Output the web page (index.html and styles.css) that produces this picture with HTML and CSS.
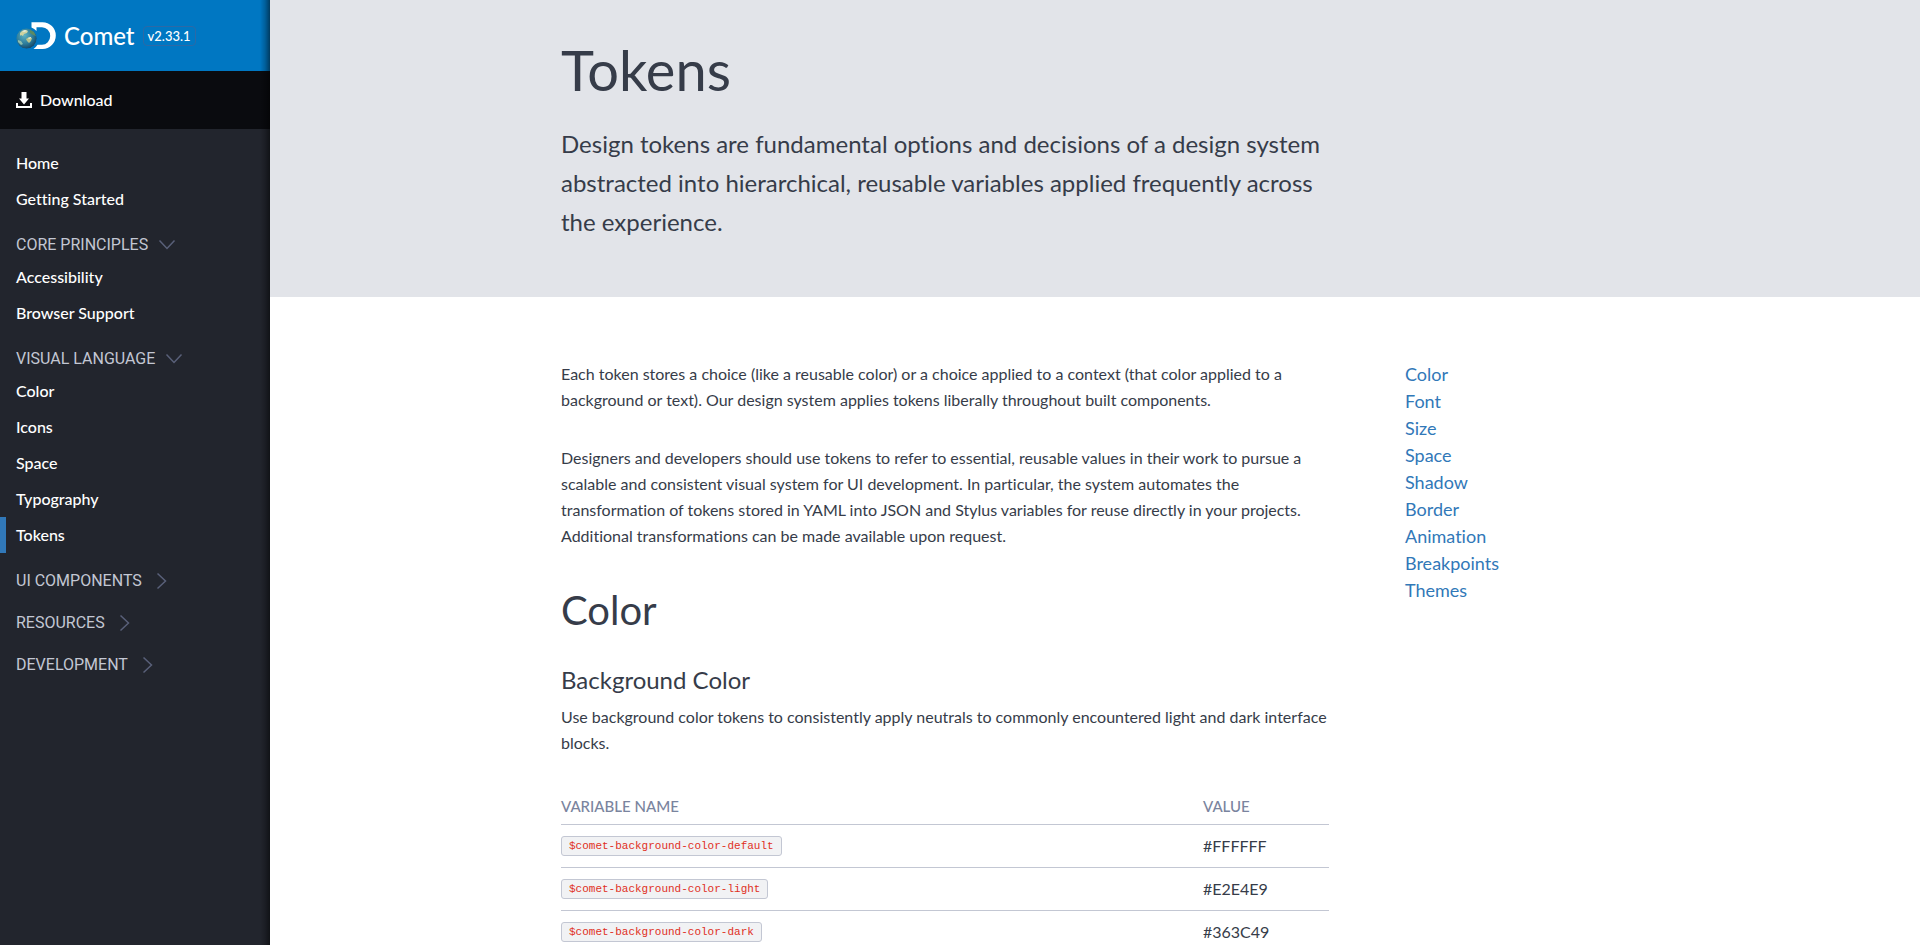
FILE: index.html
```
<!DOCTYPE html>
<html lang="en">
<head>
<meta charset="utf-8">
<meta name="viewport" content="width=device-width, initial-scale=1">
<title>Tokens | Comet</title>
<link rel="stylesheet" href="styles.css">
</head>
<body class="shell">
<aside class="sidebar">
  <a class="brand" href="#home">
    <svg class="brand-logo" width="40" height="27" viewBox="0 0 40 27" aria-hidden="true">
      <defs>
        <radialGradient id="ocean" cx="0.4" cy="0.35" r="0.7">
          <stop offset="0" stop-color="#5fb3c4"/>
          <stop offset="0.6" stop-color="#2b7a98"/>
          <stop offset="1" stop-color="#123f5f"/>
        </radialGradient>
        <clipPath id="disc"><circle cx="10.5" cy="16.5" r="10.3"/></clipPath>
      </defs>
      <path fill="#fff" d="M15.5.2H26.500a13.300 13.400 0 0 1 0 26.800H17.500a13 13 0 0 0 4-4.200H26a8.200 8.800 0 0 0 0-17.600H20.500V9a13 13 0 0 0-5-3.600Z"/>
      <g clip-path="url(#disc)">
        <circle cx="10.500" cy="16.500" r="10.300" fill="url(#ocean)"/>
        <path fill="#cfd3a0" d="M4 11l2-2 4-1 2 1-1 2-3 1-1 2-2-1-1 1z"/>
        <path fill="#b9c48c" d="M10 17l3-2 3 1-1 3-2 2-2-2z"/>
        <path fill="#5b8a62" d="M14 8l4 2 2 4-3-1-3-2z"/>
        <path fill="#8fbfae" d="M2 18l3 1 2 3-2 1-3-3z"/>
        <path fill="#e6ecdc" d="M6 9l3-1 2 1-3 1zM12 16l3-1v1l-2 1z"/>
      </g>
    </svg>
    <span class="brand-name">Comet</span>
    <span class="brand-version">v2.33.1</span>
  </a>
  <a class="download" href="#download">
    <svg width="16" height="16" viewBox="0 0 16 16" fill="#fff" aria-hidden="true">
      <path d="M5.500 0h5v6.500H13L8 12.500 3 6.500h2.500z"/>
      <path d="M0 11h2v3h12v-3h2v5H0z"/>
    </svg>
    Download
  </a>
  <nav class="nav" aria-label="Main">
    <a class="nav-link" href="#home">Home</a>
    <a class="nav-link" href="#start">Getting Started</a>
    <button class="nav-group" type="button" aria-expanded="true">Core Principles
      <svg class="chevron" width="18" height="18" viewBox="0 0 18 18" aria-hidden="true"><path d="M1.500 4.500L9 12.500l7.500-8"/></svg>
    </button>
    <a class="nav-link" href="#accessibility">Accessibility</a>
    <a class="nav-link" href="#browsers">Browser Support</a>
    <button class="nav-group" type="button" aria-expanded="true">Visual Language
      <svg class="chevron" width="18" height="18" viewBox="0 0 18 18" aria-hidden="true"><path d="M1.500 4.500L9 12.500l7.500-8"/></svg>
    </button>
    <a class="nav-link" href="#colors">Color</a>
    <a class="nav-link" href="#icons">Icons</a>
    <a class="nav-link" href="#spaces">Space</a>
    <a class="nav-link" href="#typography">Typography</a>
    <a class="nav-link is-current" href="#tokens" aria-current="page">Tokens</a>
    <button class="nav-group" type="button" aria-expanded="false">UI Components
      <svg class="chevron" width="18" height="18" viewBox="0 0 18 18" aria-hidden="true"><path d="M5.500 1.500l8 7.500-8 7.500"/></svg>
    </button>
    <button class="nav-group" type="button" aria-expanded="false">Resources
      <svg class="chevron" width="18" height="18" viewBox="0 0 18 18" aria-hidden="true"><path d="M5.500 1.500l8 7.500-8 7.500"/></svg>
    </button>
    <button class="nav-group" type="button" aria-expanded="false">Development
      <svg class="chevron" width="18" height="18" viewBox="0 0 18 18" aria-hidden="true"><path d="M5.500 1.500l8 7.500-8 7.500"/></svg>
    </button>
  </nav>
</aside>
<main class="page" id="tokens">
  <header class="hero">
    <div class="grid">
      <div class="column">
        <h1 class="title">Tokens</h1>
        <p class="lead">Design tokens are fundamental options and decisions of a design system abstracted into hierarchical, reusable variables applied frequently across the experience.</p>
      </div>
    </div>
  </header>
  <div class="grid body">
    <div class="column">
      <p class="text">Each token stores a choice (like a reusable color) or a choice applied to a context (that color applied to a background or text). Our design system applies tokens liberally throughout built components.</p>
      <p class="text">Designers and developers should use tokens to refer to essential, reusable values in their work to pursue a scalable and consistent visual system for UI development. In particular, the system automates the transformation of tokens stored in YAML into JSON and Stylus variables for reuse directly in your projects. Additional transformations can be made available upon request.</p>
      <h2 class="section-title" id="color">Color</h2>
      <h3 class="sub-title">Background Color</h3>
      <p class="text">Use background color tokens to consistently apply neutrals to commonly encountered light and dark interface blocks.</p>
      <table class="tokens">
        <thead>
          <tr><th scope="col">Variable Name</th><th scope="col" class="value">Value</th></tr>
        </thead>
        <tbody>
          <tr><td><code class="code">$comet-background-color-default</code></td><td>#FFFFFF</td></tr>
          <tr><td><code class="code">$comet-background-color-light</code></td><td>#E2E4E9</td></tr>
          <tr><td><code class="code">$comet-background-color-dark</code></td><td>#363C49</td></tr>
        </tbody>
      </table>
    </div>
    <nav class="toc" aria-label="On this page">
      <a href="#color">Color</a>
      <a href="#font">Font</a>
      <a href="#size">Size</a>
      <a href="#space">Space</a>
      <a href="#shadow">Shadow</a>
      <a href="#border">Border</a>
      <a href="#animation">Animation</a>
      <a href="#breakpoints">Breakpoints</a>
      <a href="#themes">Themes</a>
    </nav>
  </div>
</main>
</body>
</html>
```
FILE: styles.css
```
* {
  box-sizing: border-box;
}

h1, h2, h3, p {
  margin: 0;
  font-weight: 400;
}

a {
  color: inherit;
  text-decoration: none;
}

.shell {
  display: flex;
  height: 100vh;
  margin: 0;
  background: #fff;
  color: #363c49;
  font-family: Lato, "Open Sans", sans-serif;
  font-size: 16px;
  font-variant-ligatures: none;
  line-height: 26px;
}

.sidebar {
  position: relative;
  flex: 0 0 270px;
  overflow: hidden;
  background: #22252d;
  color: #fff;
}

.sidebar::after {
  content: "";
  position: absolute;
  inset: 0 0 0 auto;
  width: 10px;
  background: linear-gradient(to right, rgba(0, 0, 0, 0), rgba(0, 0, 0, 0.2) 50%, rgba(0, 0, 0, 0.5));
  pointer-events: none;
}

.brand {
  display: flex;
  align-items: center;
  height: 71px;
  padding: 0 16px;
  background: #0077c2;
}

.brand-name {
  margin-left: 8px;
  font-size: 24px;
  font-weight: 500;
}

.brand-version {
  margin-left: 8px;
  padding: 0 4px;
  border: 1px solid #2c69a6;
  border-radius: 4px;
  font-size: 13px;
  font-weight: 500;
  line-height: 18px;
}

.download {
  display: flex;
  align-items: center;
  gap: 8px;
  height: 58px;
  padding: 0 16px;
  background: #0a0b0f;
  font-weight: 500;
}

.nav {
  padding-top: 16px;
}

.nav-link {
  display: block;
  padding-left: 16px;
  font-weight: 500;
  line-height: 36px;
}

.nav-link.is-current {
  padding-left: 10px;
  border-left: 6px solid #3178b8;
}

.nav-group {
  display: flex;
  align-items: center;
  gap: 10px;
  width: 100%;
  padding: 15px 16px 1px;
  border: 0;
  background: none;
  color: #c3c7d3;
  font: 16px/26px Roboto, sans-serif;
  text-align: left;
  text-transform: uppercase;
}

.chevron {
  fill: none;
  stroke: #596079;
  stroke-width: 1.5;
}

.page {
  flex: 1;
  min-width: 0;
  overflow-y: auto;
  scrollbar-width: none;
}

.grid {
  display: grid;
  grid-template-columns: minmax(0, 768px) 224px;
  column-gap: 76px;
  justify-content: center;
  padding: 0 24px;
}

.hero {
  padding: 40px 0 56px;
  background: #e2e4e9;
}

.title {
  margin-bottom: 24px;
  font-size: 56px;
  line-height: 60px;
}

.lead {
  font-size: 24px;
  line-height: 39px;
}

.body {
  padding-top: 64px;
  padding-bottom: 64px;
}

.text + .text {
  margin-top: 32px;
}

.section-title {
  margin: 37px 0 30px;
  font-size: 40px;
  line-height: 48px;
}

.sub-title {
  margin-bottom: 8px;
  font-size: 24px;
  line-height: 32px;
}

.tokens {
  width: 100%;
  margin-top: 37px;
  border-collapse: collapse;
}

.tokens th {
  padding: 0 0 5px;
  border-bottom: 1px solid #c3c7d3;
  color: #7a849e;
  font-size: 15px;
  font-weight: 500;
  text-align: left;
  text-transform: uppercase;
}

.tokens .value {
  width: 126px;
}

.tokens td {
  padding: 8px 0;
  border-bottom: 1px solid #c3c7d3;
}

.code {
  display: block;
  width: fit-content;
  padding: 0 7px;
  border: 1px solid #c3c7d3;
  border-radius: 3px;
  background: #f1f2f4;
  color: #e0301e;
  font: 11px/18px "Liberation Mono", monospace;
}

.toc {
  color: #3178b8;
  font-size: 18px;
  line-height: 27px;
}

.toc a {
  display: block;
}
```
